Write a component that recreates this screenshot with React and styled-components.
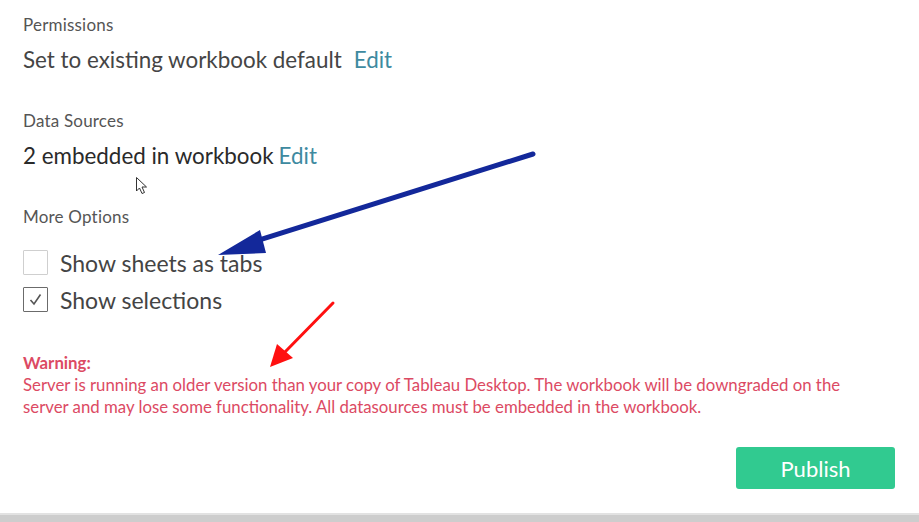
import styled, { createGlobalStyle } from 'styled-components';

const GlobalStyle = createGlobalStyle`
  html, body {
    margin: 0;
    padding: 0;
    background: #ffffff;
  }

  body {
    font-family: Lato, "Open Sans", sans-serif;
    width: 919px;
    height: 522px;
    overflow: hidden;
  }
`;

export default function App() {
  return (
    <>
      <GlobalStyle />
      <Screen>
        <Dialog>
          <Section>
            <Label>Permissions</Label>
            <Value>
              Set to existing workbook default<EditLink spaced>Edit</EditLink>
            </Value>
          </Section>

          <Section>
            <Label>Data Sources</Label>
            <Value dark>
              2 embedded in workbook<EditLink>Edit</EditLink>
            </Value>
          </Section>

          <Section>
            <Label>More Options</Label>
            <Options>
              <Option>
                <Box />
                <span>Show sheets as tabs</span>
              </Option>
              <Option>
                <Box checked>
                  <svg width="15" height="15" viewBox="0 0 15 15">
                    <path d="M2.5 8 L6 12 L12.5 2.5" fill="none" stroke="#555" strokeWidth="1.6" />
                  </svg>
                </Box>
                <span>Show selections</span>
              </Option>
            </Options>
          </Section>

          <Warning>
            <WarningTitle>Warning:</WarningTitle>
            <WarningText>
              Server is running an older version than your copy of Tableau Desktop. The workbook will be downgraded on the
              server and may lose some functionality. All datasources must be embedded in the workbook.
            </WarningText>
          </Warning>

          <Actions>
            <PublishButton>Publish</PublishButton>
          </Actions>

          <Annotations width="919" height="513" viewBox="0 0 919 513">
            <line x1="533" y1="154" x2="250" y2="243" stroke="#13289a" strokeWidth="5" strokeLinecap="round" />
            <polygon points="218,255 260,230 266,253" fill="#13289a" />
            <line x1="333" y1="303" x2="284" y2="353" stroke="#ff1010" strokeWidth="3" strokeLinecap="round" />
            <polygon points="270,367 277,344 293,358" fill="#ff1010" />
            <path
              d="M136.5 177.5 L136.5 191 L139.5 188 L142 193.5 L144.5 192.5 L142 187 L146.5 187 Z"
              fill="#fff"
              stroke="#333"
              strokeWidth="1"
              strokeLinejoin="round"
            />
          </Annotations>
        </Dialog>
        <BottomEdge />
      </Screen>
    </>
  );
}

const Screen = styled.div`
  display: flex;
  flex-direction: column;
  width: 919px;
  height: 522px;
`;

const Dialog = styled.div`
  position: relative;
  display: flex;
  flex-direction: column;
  height: 513px;
  padding: 14px 24px 0 23px;
  box-sizing: border-box;
  background: #ffffff;
`;

const Section = styled.div`
  display: flex;
  flex-direction: column;
  margin-bottom: 35px;
`;

const Label = styled.div`
  font-size: 17px;
  line-height: 22px;
  letter-spacing: 0.2px;
  color: #555555;
  margin-bottom: 9px;
`;

const Value = styled.div`
  font-size: 22.4px;
  line-height: 30px;
  color: ${props => props.dark ? '#2a2a2a' : '#454545'};
`;

const EditLink = styled.span`
  color: #3e8aa0;
  margin-left: ${props => props.spaced ? '12px' : '5px'};
  cursor: pointer;
`;

const Options = styled.div`
  display: flex;
  flex-direction: column;
  gap: 10px;
  margin-top: 12px;
`;

const Option = styled.label`
  display: flex;
  align-items: center;
  gap: 12px;
  height: 27px;
  font-size: 23px;
  color: #444444;
`;

const Box = styled.span`
  display: flex;
  align-items: center;
  justify-content: center;
  width: 25px;
  height: 25px;
  box-sizing: border-box;
  border: 1.5px solid ${props => props.checked ? '#6b6b6b' : '#cfcfcf'};
  border-radius: 1px;
  background: #ffffff;
`;

const Warning = styled.div`
  display: flex;
  flex-direction: column;
  margin-top: 4px;
  color: #dc4a63;
  font-size: 16.8px;
  line-height: 22px;
`;

const WarningTitle = styled.div`
  font-weight: 700;
`;

const WarningText = styled.div`
  max-width: 835px;
`;

const Actions = styled.div`
  display: flex;
  justify-content: flex-end;
  margin-top: 29px;
`;

const PublishButton = styled.button`
  width: 159px;
  height: 42px;
  border: none;
  border-radius: 3px;
  background: #31ca90;
  color: #ffffff;
  font-family: Lato, "Open Sans", sans-serif;
  font-size: 22px;
  cursor: pointer;
`;

const Annotations = styled.svg`
  position: absolute;
  top: 0;
  left: 0;
  pointer-events: none;
`;

const BottomEdge = styled.div`
  flex: 1;
  background: #cdcdcd;
  border-top: 2px solid #e2e2e2;
`;
